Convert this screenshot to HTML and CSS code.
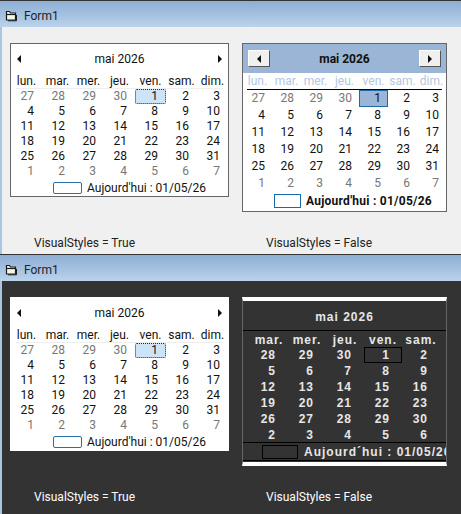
FILE: index.html
```html
<!DOCTYPE html>
<html lang="fr">
<head>
  <meta charset="UTF-8" />
  <title>Form1</title>
  <link rel="stylesheet" href="styles.css">
</head>
<body>
  <svg width="0" height="0" class="defs">
    <symbol id="form-icon" viewBox="0 0 12 12">
      <path d="M1.5 1.5h3l1 1.5h5v7h-9z" fill="#f4f6e8" stroke="#1c1c1c" stroke-width="1.2"/>
      <path d="M1.5 4.5h9" stroke="#1c1c1c" stroke-width="1.2"/>
      <path d="M3 10.8h8.5V5" fill="none" stroke="#1c1c1c" stroke-width="1"/>
    </symbol>
  </svg>

  <section class="window window-light">
    <header class="titlebar">
      <svg class="form-icon" width="12" height="12"><use href="#form-icon"/></svg>
      <span>Form1</span>
    </header>
    <div class="client">
      <div class="cal cal-themed">
        <div class="cal-head">
          <i class="arrow arrow-left"></i>
          <span class="cal-title">mai 2026</span>
          <i class="arrow arrow-right"></i>
        </div>
        <div class="dow"><span>lun.</span><span>mar.</span><span>mer.</span><span>jeu.</span><span>ven.</span><span>sam.</span><span>dim.</span></div>
        <div class="days">
          <span class="other">27</span><span class="other">28</span><span class="other">29</span><span class="other">30</span><span class="sel">1</span><span>2</span><span>3</span>
          <span>4</span><span>5</span><span>6</span><span>7</span><span>8</span><span>9</span><span>10</span>
          <span>11</span><span>12</span><span>13</span><span>14</span><span>15</span><span>16</span><span>17</span>
          <span>18</span><span>19</span><span>20</span><span>21</span><span>22</span><span>23</span><span>24</span>
          <span>25</span><span>26</span><span>27</span><span>28</span><span>29</span><span>30</span><span>31</span>
          <span class="other">1</span><span class="other">2</span><span class="other">3</span><span class="other">4</span><span class="other">5</span><span class="other">6</span><span class="other">7</span>
        </div>
        <div class="today"><i class="today-box"></i><span>Aujourd'hui : 01/05/26</span></div>
      </div>

      <div class="cal cal-classic">
        <div class="cal-head">
          <button class="nav"><i class="arrow arrow-left"></i></button>
          <span class="cal-title">mai 2026</span>
          <button class="nav"><i class="arrow arrow-right"></i></button>
        </div>
        <div class="dow"><span>lun.</span><span>mar.</span><span>mer.</span><span>jeu.</span><span>ven.</span><span>sam.</span><span>dim.</span></div>
        <div class="days">
          <span class="other">27</span><span class="other">28</span><span class="other">29</span><span class="other">30</span><span class="sel">1</span><span>2</span><span>3</span>
          <span>4</span><span>5</span><span>6</span><span>7</span><span>8</span><span>9</span><span>10</span>
          <span>11</span><span>12</span><span>13</span><span>14</span><span>15</span><span>16</span><span>17</span>
          <span>18</span><span>19</span><span>20</span><span>21</span><span>22</span><span>23</span><span>24</span>
          <span>25</span><span>26</span><span>27</span><span>28</span><span>29</span><span>30</span><span>31</span>
          <span class="other">1</span><span class="other">2</span><span class="other">3</span><span class="other">4</span><span class="other">5</span><span class="other">6</span><span class="other">7</span>
        </div>
        <div class="today"><i class="today-box"></i><span>Aujourd'hui : 01/05/26</span></div>
      </div>

      <p class="caption">VisualStyles = True</p>
      <p class="caption">VisualStyles = False</p>
    </div>
  </section>

  <section class="window window-dark">
    <header class="titlebar">
      <svg class="form-icon" width="12" height="12"><use href="#form-icon"/></svg>
      <span>Form1</span>
    </header>
    <div class="client">
      <div class="cal cal-themed">
        <div class="cal-head">
          <i class="arrow arrow-left"></i>
          <span class="cal-title">mai 2026</span>
          <i class="arrow arrow-right"></i>
        </div>
        <div class="dow"><span>lun.</span><span>mar.</span><span>mer.</span><span>jeu.</span><span>ven.</span><span>sam.</span><span>dim.</span></div>
        <div class="days">
          <span class="other">27</span><span class="other">28</span><span class="other">29</span><span class="other">30</span><span class="sel">1</span><span>2</span><span>3</span>
          <span>4</span><span>5</span><span>6</span><span>7</span><span>8</span><span>9</span><span>10</span>
          <span>11</span><span>12</span><span>13</span><span>14</span><span>15</span><span>16</span><span>17</span>
          <span>18</span><span>19</span><span>20</span><span>21</span><span>22</span><span>23</span><span>24</span>
          <span>25</span><span>26</span><span>27</span><span>28</span><span>29</span><span>30</span><span>31</span>
          <span class="other">1</span><span class="other">2</span><span class="other">3</span><span class="other">4</span><span class="other">5</span><span class="other">6</span><span class="other">7</span>
        </div>
        <div class="today"><i class="today-box"></i><span>Aujourd'hui : 01/05/26</span></div>
      </div>

      <div class="cal cal-dark">
        <div class="cal-title">mai 2026</div>
        <div class="dow"><span>mar.</span><span>mer.</span><span>jeu.</span><span>ven.</span><span>sam.</span></div>
        <div class="days">
          <span>28</span><span>29</span><span>30</span><span class="sel">1</span><span>2</span>
          <span>5</span><span>6</span><span>7</span><span>8</span><span>9</span>
          <span>12</span><span>13</span><span>14</span><span>15</span><span>16</span>
          <span>19</span><span>20</span><span>21</span><span>22</span><span>23</span>
          <span>26</span><span>27</span><span>28</span><span>29</span><span>30</span>
          <span>2</span><span>3</span><span>4</span><span>5</span><span>6</span>
        </div>
        <div class="today"><i class="today-box"></i><span class="today-text">Aujourd´hui : 01/05/26</span></div>
      </div>

      <p class="caption">VisualStyles = True</p>
      <p class="caption">VisualStyles = False</p>
    </div>
  </section>
</body>
</html>
```

FILE: styles.css
```css
* {
  box-sizing: border-box;
}
html, body {
  margin: 0;
  height: 100%;
  overflow: hidden;
}
body {
  width: 461px;
  height: 514px;
  font-family: Roboto, "Open Sans", sans-serif;
  font-size: 12px;
  color: #111;
  background: #f0f0f0;
}
.defs {
  position: absolute;
}
i {
  display: block;
}

/* windows */
.window-light {
  height: 254px;
}
.window-dark {
  height: 260px;
}
.titlebar {
  height: 27px;
  border-top: 1px solid #333;
  display: flex;
  align-items: center;
  gap: 7px;
  padding: 3px 0 0 5px;
  background: linear-gradient(#8eaed3, #bad2ec);
  color: #222;
}
.client {
  display: grid;
  grid-template-columns: 219px 205px;
  grid-template-rows: 169px auto;
  column-gap: 13px;
  align-items: start;
  padding: 16px 0 0 8px;
  border-left: 2px solid #a9c6e8;
  height: calc(100% - 27px);
  background: #f0f0f0;
}
.window-dark .client {
  background: #333;
}
.caption {
  margin: 23px 0 0;
  padding-left: 24px;
  line-height: 16px;
  color: #222;
}
.window-dark .caption {
  color: #fff;
}

/* shared calendar bits */
.arrow {
  width: 0;
  height: 0;
  border-top: 4px solid transparent;
  border-bottom: 4px solid transparent;
}
.arrow-left {
  border-right: 4px solid #111;
}
.arrow-right {
  border-left: 4px solid #111;
}
.dow, .days {
  display: grid;
}
.dow span {
  text-align: center;
}
.days span {
  text-align: right;
}

/* VisualStyles = True */
.cal-themed {
  height: 154px;
  background: #fff;
  border: 1px solid #666;
}
.window-dark .cal-themed {
  border-color: #fff;
}
.cal-themed .cal-head {
  height: 29px;
  padding: 0 6px;
  display: flex;
  align-items: center;
  justify-content: space-between;
}
.cal-themed .dow {
  grid-template-columns: repeat(7, 31px);
  line-height: 16px;
  background: linear-gradient(#eee, #eee) center bottom / 207px 1px no-repeat;
}
.cal-themed .days {
  grid-template-columns: repeat(7, 31px);
  grid-auto-rows: 15px;
  line-height: 15px;
}
.cal-themed .days span {
  padding-right: 8px;
}
.cal-themed .other {
  color: #777;
}
.cal-themed .days .sel {
  background: #cce4f7;
  border: 1px dotted #0c2f5c;
  border-radius: 2px;
  line-height: 13px;
  padding-right: 7px;
}
.cal-themed .today {
  display: flex;
  align-items: center;
  gap: 5px;
  padding: 1px 0 0 42px;
  height: 16px;
}
.cal-themed .today-box {
  width: 29px;
  height: 12px;
  border: 1px solid #2a6fa5;
  border-radius: 2px;
}

/* VisualStyles = False */
.cal-classic {
  height: 169px;
  background: #fff;
  border: 1px solid #666;
}
.cal-classic .cal-head {
  height: 29px;
  background: #9ab5d6;
  padding: 0 5px;
  display: flex;
  align-items: center;
  justify-content: space-between;
  color: #111;
}
.cal-classic .cal-title {
  font-weight: 700;
}
.nav {
  width: 22px;
  height: 17px;
  padding: 0;
  display: flex;
  align-items: center;
  justify-content: center;
  background: #f0f0f0;
  border: 1px solid;
  border-color: #fff #555 #555 #fff;
}
.cal-classic .dow {
  grid-template-columns: repeat(7, 29px);
  line-height: 17px;
  color: #b3c6de;
  background: linear-gradient(#000, #000) center bottom / 195px 1px no-repeat;
}
.cal-classic .days {
  grid-template-columns: repeat(7, 29px);
  grid-auto-rows: 17px;
  line-height: 17px;
}
.cal-classic .days span {
  padding-right: 7px;
}
.cal-classic .other {
  color: #777;
}
.cal-classic .days .sel {
  background: #9ab5d6;
  border: 1px solid #1a6aa8;
  line-height: 15px;
  padding-right: 6px;
}
.cal-classic .today {
  display: flex;
  align-items: center;
  gap: 5px;
  padding: 0 0 0 31px;
  height: 17px;
  font-weight: 700;
  letter-spacing: 0.25px;
}
.cal-classic .today-box {
  width: 27px;
  height: 14px;
  border: 1px solid #1a6aa8;
}

/* VisualStyles = False on the dark form */
.cal-dark {
  height: 169px;
  overflow: hidden;
  background: #333;
  border: 1px solid #666;
  border-top: 4px solid #fff;
  border-bottom: 4px solid #fff;
  font-family: "Liberation Sans", sans-serif;
  font-weight: 700;
  letter-spacing: 1px;
  color: #e6e6e6;
}
.cal-dark .cal-title {
  height: 30px;
  line-height: 30px;
  padding-top: 1px;
  text-align: center;
  border-bottom: 1px solid #000;
}
.cal-dark .dow, .cal-dark .days {
  grid-template-columns: repeat(5, 38px);
  padding-left: 7px;
}
.cal-dark .dow {
  line-height: 16px;
  padding-top: 1px;
  height: 16px;
}
.cal-dark .days {
  grid-auto-rows: 16px;
  line-height: 15px;
}
.cal-dark .days span {
  padding: 1px 12px 0 0;
}
.cal-dark .days .sel {
  border: 1px solid #000;
  line-height: 14px;
  padding: 0 11px 0 0;
}
.cal-dark .today {
  display: flex;
  align-items: center;
  gap: 6px;
  height: 19px;
  margin-top: -1px;
  padding-left: 19px;
  border-top: 1px solid #000;
  border-bottom: 1px solid #000;
  white-space: nowrap;
}
.cal-dark .today-box {
  flex: none;
  width: 36px;
  height: 14px;
  border: 1px solid #000;
}
```
